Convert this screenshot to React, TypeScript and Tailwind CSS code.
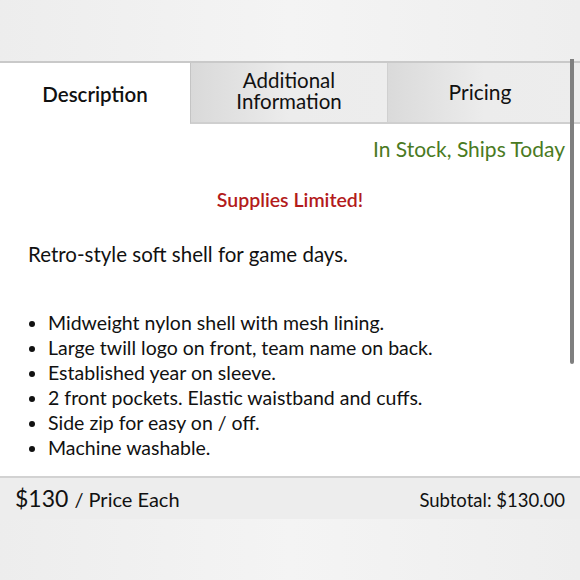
import React from 'react';

const features = [
  'Midweight nylon shell with mesh lining.',
  'Large twill logo on front, team name on back.',
  'Established year on sleeve.',
  '2 front pockets. Elastic waistband and cuffs.',
  'Side zip for easy on / off.',
  'Machine washable.',
];

export default function App() {
  return (
    <div
      className="w-[580px] h-[580px] overflow-hidden flex flex-col bg-gradient-to-r from-[#ededed] via-[#f4f4f4] to-[#eeeeee] text-[#111]"
      style={{ fontFamily: 'Lato, "Noto Sans", sans-serif' }}
    >
      <div className="h-[61px] shrink-0" />

      <div className="relative flex flex-col bg-white border-t-2 border-[#c9c9c9]">
        {/* Tabs */}
        <div className="flex h-[61px]">
          <div className="w-[190px] flex items-center justify-center bg-white text-[20.5px] font-semibold pt-[2px]">
            Description
          </div>
          <div className="w-[197px] flex items-center justify-center text-center leading-[21px] text-[20.5px] bg-gradient-to-r from-[#d9d9d9] via-[#ececec] to-[#ededed] border-l border-[#c4c4c4] border-b-2 border-b-[#cfcfcf] pb-[4px]">
            Additional
            <br />
            Information
          </div>
          <div className="flex-1 flex items-center justify-center text-[21px] bg-gradient-to-r from-[#dadada] via-[#ececec] to-[#ededed] border-l border-[#d0d0d0] border-b-2 border-b-[#cfcfcf] pr-[8px] pb-[2px]">
            Pricing
          </div>
        </div>

        {/* Body */}
        <div className="h-[352px] flex flex-col">
          <div className="text-right pr-[15px] pt-[11px] text-[21px] leading-[28px] text-[#4a7a22]">
            In Stock, Ships Today
          </div>
          <div className="text-center pt-[24px] text-[19.5px] leading-[26px] font-semibold text-[#b31b1b]">
            Supplies Limited!
          </div>
          <div className="pl-[28px] pt-[28px] text-[20.5px] leading-[26px]">
            Retro-style soft shell for game days.
          </div>
          <ul className="pl-[48px] pt-[43px] list-disc text-[19.5px] leading-[25px]">
            {features.map((f) => (
              <li key={f}>{f}</li>
            ))}
          </ul>
        </div>

        {/* Scrollbar */}
        <div className="absolute right-[6px] top-[-4px] w-[4px] h-[305px] bg-[#7f7f7f] rounded-b-sm" />
      </div>

      {/* Footer */}
      <div className="h-[43px] shrink-0 flex items-center justify-between px-[15px] bg-[#ededed] border-t-2 border-[#d2d2d2]">
        <div className="flex items-baseline gap-[6px]">
          <span className="text-[23px]">$130</span>
          <span className="text-[20px]">/ Price Each</span>
        </div>
        <span className="text-[18.5px] pt-[4px]">Subtotal: $130.00</span>
      </div>
    </div>
  );
}
